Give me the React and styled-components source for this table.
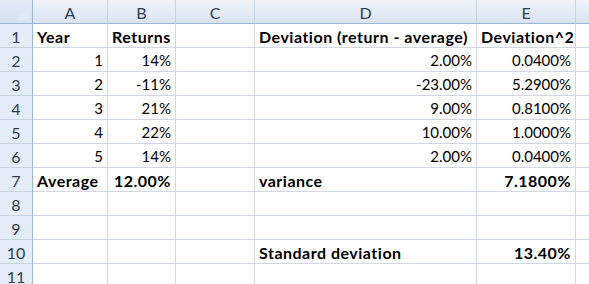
import React from "react"
import styled, { createGlobalStyle } from "styled-components"

const GlobalStyle = createGlobalStyle`
    html, body {
        margin: 0;
        padding: 0;
        background: #ffffff;
        overflow: hidden;
    }
`

const columns = [
    { name: "A", width: 75 },
    { name: "B", width: 68 },
    { name: "C", width: 79 },
    { name: "D", width: 222 },
    { name: "E", width: 99 },
    { name: "", width: 75 }
]

const rows = [
    [{ v: "Year", b: true }, { v: "Returns", b: true }, null, { v: "Deviation (return - average)", b: true }, { v: "Deviation^2", b: true }],
    [{ v: "1", r: true }, { v: "14%", r: true }, null, { v: "2.00%", r: true }, { v: "0.0400%", r: true }],
    [{ v: "2", r: true }, { v: "-11%", r: true }, null, { v: "-23.00%", r: true }, { v: "5.2900%", r: true }],
    [{ v: "3", r: true }, { v: "21%", r: true }, null, { v: "9.00%", r: true }, { v: "0.8100%", r: true }],
    [{ v: "4", r: true }, { v: "22%", r: true }, null, { v: "10.00%", r: true }, { v: "1.0000%", r: true }],
    [{ v: "5", r: true }, { v: "14%", r: true }, null, { v: "2.00%", r: true }, { v: "0.0400%", r: true }],
    [{ v: "Average", b: true }, { v: "12.00%", b: true, r: true }, null, { v: "variance", b: true }, { v: "7.1800%", b: true, r: true }],
    [],
    [],
    [null, null, null, { v: "Standard deviation", b: true }, { v: "13.40%", b: true, r: true }],
    []
]

const Sheet = styled.div`
    display: grid;
    grid-template-columns: 33px ${columns.map(c => c.width + "px").join(" ")};
    grid-auto-rows: 24px;
    font-family: Lato, "Liberation Sans", sans-serif;
    font-size: 15px;
    color: #000;
    width: 589px;
    overflow: hidden;
`

const Corner = styled.div`
    position: relative;
    background: linear-gradient(#e4ecf7, #d5e1f0);
    border-right: 1px solid #9eb6ce;
    border-bottom: 1px solid #9eb6ce;
    &::after {
        content: "";
        position: absolute;
        right: 3px;
        bottom: 3px;
        border-style: solid;
        border-width: 0 0 13px 13px;
        border-color: transparent transparent #dfe8f4 transparent;
    }
`

const ColHead = styled.div`
    display: flex;
    align-items: center;
    justify-content: center;
    overflow: hidden;
    padding-top: 1px;
    background: linear-gradient(#f1f5fb 0%, #e4ebf5 55%, #d9e3f0 100%);
    border-right: 1px solid #c5d3e3;
    border-bottom: 1px solid #9eb6ce;
    color: #2f3e55;
    font-size: 16px;
`

const RowHead = styled.div`
    display: flex;
    align-items: center;
    justify-content: center;
    padding-top: 1px;
    background: #e4ecf7;
    border-right: 1px solid #9eb6ce;
    border-bottom: 1px solid #c5d3e3;
    color: #2f3e55;
    font-size: 16px;
`

const Cell = styled.div`
    display: flex;
    align-items: center;
    justify-content: ${p => (p.$right ? "flex-end" : "flex-start")};
    padding: 1px 4px 0 4px;
    border-right: 1px solid #d0d7e5;
    border-bottom: 1px solid #d0d7e5;
    font-weight: ${p => (p.$bold ? 700 : 400)};
    font-size: ${p => (p.$bold ? "16px" : "15px")};
    letter-spacing: ${p => (p.$bold ? "0.5px" : "0")};
    white-space: nowrap;
`

const App = () =>
    <>
        <GlobalStyle />
        <Sheet>
            <Corner />
            {columns.map((c, j) => <ColHead key={j}>{c.name}</ColHead>)}
            {rows.map((row, i) =>
                <React.Fragment key={i}>
                    <RowHead>{i + 1}</RowHead>
                    {columns.map((c, j) => {
                        const cell = row[j]
                        return (
                            <Cell key={j} $right={cell && cell.r} $bold={cell && cell.b}>
                                {cell ? cell.v : ""}
                            </Cell>
                        )
                    })}
                </React.Fragment>
            )}
        </Sheet>
    </>

export default App
